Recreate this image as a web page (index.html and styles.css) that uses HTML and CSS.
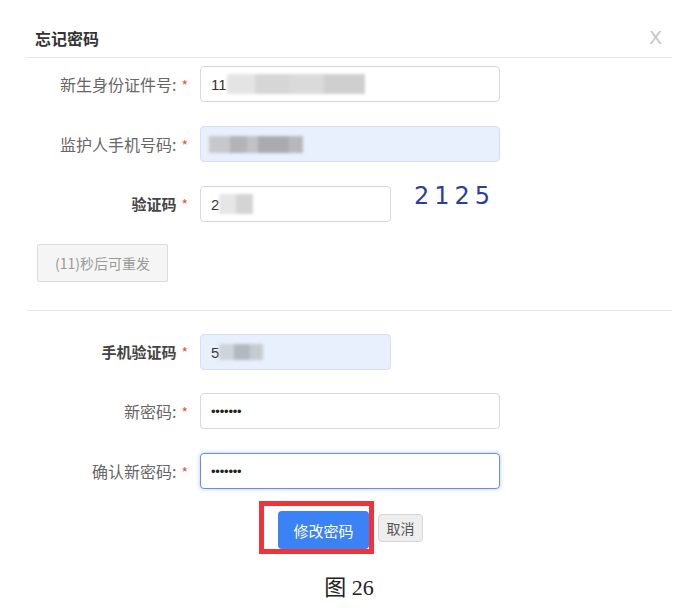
FILE: index.html
```html
<!DOCTYPE html>
<html lang="zh-CN">
<head>
  <meta charset="UTF-8" />
  <title>忘记密码</title>
  <link rel="stylesheet" href="styles.css">
</head>
<body>
  <div class="dialog">
    <div class="dialog-header">
      <h3>忘记密码</h3>
      <span class="close">X</span>
    </div>

    <div class="form-row">
      <label>新生身份证件号:<span class="req">*</span></label>
      <div class="field wide">11<span class="mask mask-id"></span></div>
    </div>

    <div class="form-row">
      <label>监护人手机号码:<span class="req">*</span></label>
      <div class="field wide filled"><span class="mask mask-phone"></span></div>
    </div>

    <div class="form-row">
      <label class="bold">验证码<span class="req">*</span></label>
      <div class="field short">2<span class="mask mask-code"></span></div>
      <span class="captcha">2125</span>
    </div>

    <button class="resend">(11)秒后可重发</button>

    <hr class="divider" />

    <div class="form-row">
      <label class="bold">手机验证码<span class="req">*</span></label>
      <div class="field short filled">5<span class="mask mask-sms"></span></div>
    </div>

    <div class="form-row">
      <label>新密码:<span class="req">*</span></label>
      <div class="field wide dots">&bull;&bull;&bull;&bull;&bull;&bull;&bull;</div>
    </div>

    <div class="form-row">
      <label>确认新密码:<span class="req">*</span></label>
      <div class="field wide dots focus">&bull;&bull;&bull;&bull;&bull;&bull;&bull;</div>
    </div>

    <div class="actions">
      <div class="highlight">
        <button class="btn-primary">修改密码</button>
      </div>
      <button class="btn-cancel">取消</button>
    </div>
  </div>

  <p class="caption">图 26</p>
</body>
</html>
```

FILE: styles.css
```css
body {
  margin: 0;
  background: #fff;
  font-family: "Noto Sans CJK SC", "Noto Sans", sans-serif;
  color: #333;
}
.dialog {
  padding: 0 26px 0 26px;
}
.dialog-header {
  display: flex;
  justify-content: space-between;
  align-items: center;
  padding: 28px 10px 9px 9px;
  border-bottom: 1px solid #e8e8e8;
}
.dialog-header h3 {
  margin: 0;
  font-size: 16px;
  line-height: 20px;
  font-weight: 700;
  color: #333;
}
.close {
  font-family: "Liberation Sans", sans-serif;
  font-size: 19px;
  line-height: 20px;
  color: #c4c4c4;
}
.form-row {
  display: flex;
  align-items: flex-start;
  margin-top: 23px;
}
.dialog-header + .form-row {
  margin-top: 8px;
}
.form-row label {
  width: 162px;
  padding-right: 12px;
  text-align: right;
  font-size: 16px;
  line-height: 36px;
  color: #666;
}
.form-row label.bold {
  font-size: 15px;
  font-weight: 700;
  color: #444;
}
.req {
  color: #e8553f;
  font-weight: 400;
  font-size: 14px;
  margin-left: 5px;
}
.field {
  box-sizing: border-box;
  height: 36px;
  padding: 0 10px;
  display: flex;
  align-items: center;
  border: 1px solid #d9d9d9;
  border-radius: 4px;
  background: #fff;
  font-family: "Liberation Sans", sans-serif;
  font-size: 15px;
  color: #333;
}
.field.wide {
  width: 300px;
}
.field.short {
  width: 191px;
}
.field.filled {
  background: #e8f0fe;
  border-color: #d8e0ee;
}
.field.dots {
  font-size: 13px;
  letter-spacing: -0.2px;
  color: #222;
}
.field.focus {
  border-color: #6b8fd6;
  box-shadow: 0 0 4px rgba(90, 130, 215, 0.45);
}
.mask {
  display: inline-block;
  height: 20px;
  filter: blur(1.5px);
}
.mask-id {
  width: 138px;
  background: linear-gradient(90deg, #e4e4e4 0 20%, #d6d6d6 20% 45%, #dadada 45% 70%, #cfcfcf 70% 100%);
}
.mask-phone {
  width: 94px;
  height: 17px;
  margin-left: -2px;
  background: linear-gradient(90deg, #c8c8cc 0 22%, #b3b3b8 22% 40%, #c2c2c6 40% 52%, #aaaab0 52% 85%, #b8b8bc 85% 100%);
}
.mask-code {
  width: 34px;
  background: linear-gradient(90deg, #e6e6e6 0 50%, #d4d4d4 50% 100%);
}
.mask-sms {
  width: 44px;
  height: 16px;
  background: linear-gradient(90deg, #cfd3da 0 35%, #b4b8c0 35% 70%, #c6cad2 70% 100%);
}
.captcha {
  margin-left: 23px;
  margin-top: -4px;
  font-family: "DejaVu Sans", sans-serif;
  font-size: 24px;
  letter-spacing: 5px;
  color: #2c3d9e;
}
.resend {
  display: block;
  margin: 22px 0 0 11px;
  width: 131px;
  height: 38px;
  padding: 0;
  background: #f5f5f5;
  border: 1px solid #dcdcdc;
  border-radius: 2px;
  font-family: "Noto Sans CJK SC", sans-serif;
  font-size: 14px;
  color: #999;
}
.divider {
  margin: 28px 0 0 1px;
  border: none;
  border-top: 1px solid #e8e8e8;
}
.divider + .form-row {
  margin-top: 23px;
}
.actions {
  display: flex;
  align-items: center;
  margin: 11px 0 0 233px;
}
.highlight {
  display: flex;
  box-sizing: border-box;
  width: 115px;
  height: 53px;
  padding: 5px 0 0 14px;
  border: 5px solid #f0333a;
}
.btn-primary {
  width: 91px;
  height: 38px;
  margin-right: -6px;
  border: none;
  border-radius: 4px;
  background: #3a82f6;
  color: #fff;
  font-family: "Noto Sans CJK SC", sans-serif;
  font-size: 15px;
}
.btn-cancel {
  margin-left: 4px;
  width: 45px;
  height: 28px;
  padding: 0;
  background: #eeeeee;
  border: 1px solid #d6d6d6;
  border-radius: 4px;
  font-family: "Noto Sans CJK SC", sans-serif;
  font-size: 14px;
  color: #555;
}
.caption {
  margin: 15px 0 0 0;
  text-align: center;
  font-family: "Liberation Serif", "Noto Sans CJK SC", serif;
  font-size: 22px;
  color: #222;
}
```
